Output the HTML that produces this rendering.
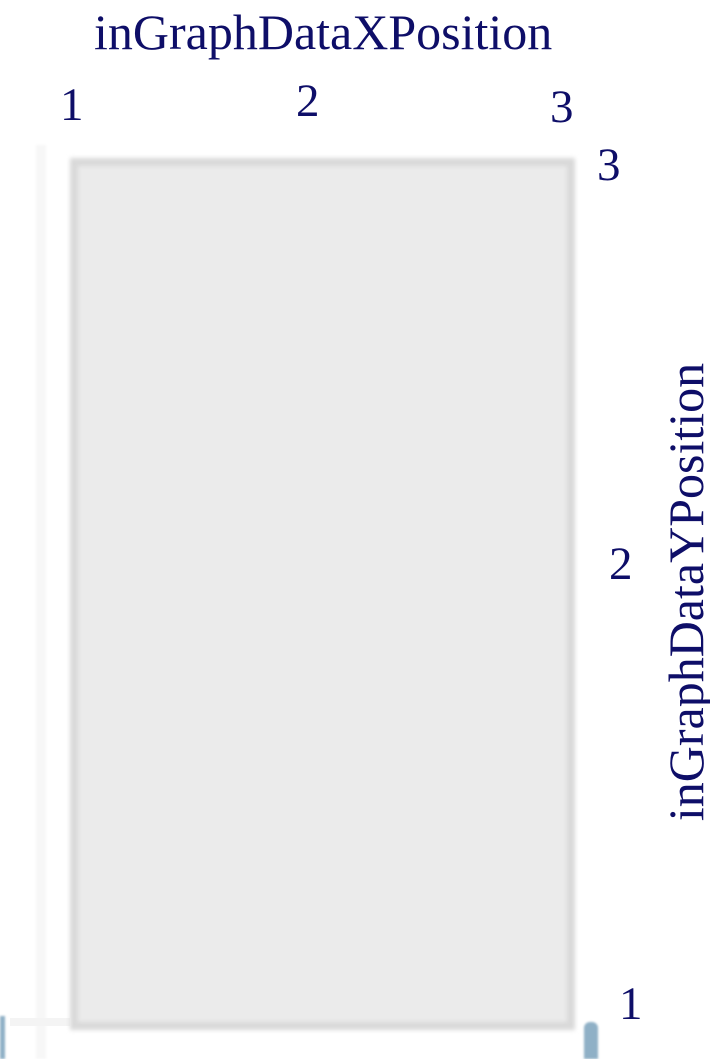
<!DOCTYPE html>
<html><head><style>
body{margin:0;width:710px;height:1059px;background:#fff;position:relative;overflow:hidden;font-family:"Liberation Serif",serif;color:#0e0e68}
.t{position:absolute;font-size:47px;line-height:1;white-space:nowrap}
</style></head><body>
<div style="position:absolute;left:36px;top:145px;width:10px;height:914px;background:#f7f7f7;filter:blur(1px)"></div>
<div style="position:absolute;left:10px;top:1018px;width:60px;height:8px;background:#f4f4f4"></div>
<div style="position:absolute;left:70px;top:158px;width:505px;height:872px;box-sizing:border-box;border:8px solid #d9d9d9;background:#ebebeb;filter:blur(2px)"></div>
<div style="position:absolute;left:0;top:1016px;width:5px;height:43px;background:#8fb0c6;filter:blur(1px)"></div>
<div style="position:absolute;left:584px;top:1022px;width:14px;height:37px;background:#8fb0c6;border-radius:6px 6px 0 0;filter:blur(1px)"></div>
<div class="t" style="left:94px;top:7px;font-size:50px">inGraphDataXPosition</div>
<div class="t" style="left:60px;top:82px">1</div>
<div class="t" style="left:296px;top:78px">2</div>
<div class="t" style="left:550px;top:84px">3</div>
<div class="t" style="left:597px;top:142px">3</div>
<div class="t" style="left:609px;top:541px">2</div>
<div class="t" style="left:619px;top:981px">1</div>
<div class="t" style="left:686px;top:592px;font-size:50px;transform:translate(-50%,-50%) rotate(-90deg)">inGraphDataYPosition</div>
</body></html>
